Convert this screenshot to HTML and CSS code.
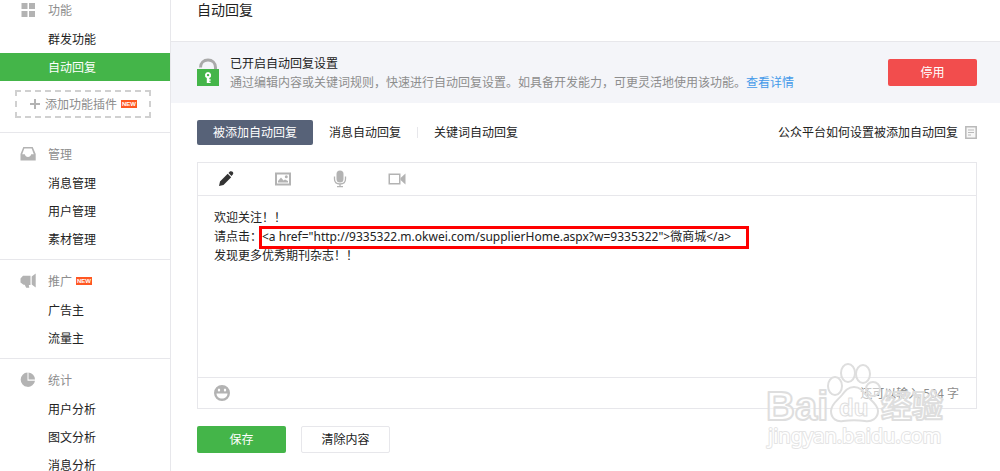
FILE: index.html
```html
<!DOCTYPE html>
<html lang="zh-CN">
<head>
  <meta charset="UTF-8" />
  <meta name="viewport" content="width=device-width, initial-scale=1" />
  <title>自动回复</title>
  <link rel="stylesheet" href="styles.css">
</head>
<body>
  <div class="layout">
    <nav class="sidebar">
      <section class="menu">
        <h2 class="menu-title">
          <svg class="menu-icon" viewBox="0 0 16 16"><path d="M1.500 1h6v6h-6zM9 1h6v6H9zM1.500 9h6v6h-6zM9 9h6v6H9z"/></svg>
          功能
        </h2>
        <a class="menu-item" href="#">群发功能</a>
        <a class="menu-item active" href="#">自动回复</a>
        <a class="add-plugin" href="#">
          <svg class="plus" viewBox="0 0 12 12"><path d="M5 1h2v4h4v2H7v4H5V7H1V5h4z"/></svg>
          添加功能插件
          <span class="new">NEW</span>
        </a>
      </section>

      <section class="menu">
        <h2 class="menu-title">
          <svg class="menu-icon" viewBox="0 0 16 16"><path fill-rule="evenodd" d="M3.300 1h9.400L15.700 8v6.500H.5V8zM4.300 2.500L2.200 8.300h2.600c.6 2 1.600 2.700 3.200 2.700s2.600-.7 3.200-2.700h2.600L11.700 2.500z"/></svg>
          管理
        </h2>
        <a class="menu-item" href="#">消息管理</a>
        <a class="menu-item" href="#">用户管理</a>
        <a class="menu-item" href="#">素材管理</a>
      </section>

      <section class="menu">
        <h2 class="menu-title">
          <svg class="menu-icon" viewBox="0 0 16 16"><path d="M15.700.5v14l-4-3V3.500zM10.500 2.800v9.200H8.800l.5 2.800H6.200l-1.500-3H3.500L.5 9.500v-4l2.500-2.700z"/></svg>
          推广
          <span class="new">NEW</span>
        </h2>
        <a class="menu-item" href="#">广告主</a>
        <a class="menu-item" href="#">流量主</a>
      </section>

      <section class="menu">
        <h2 class="menu-title">
          <svg class="menu-icon" viewBox="0 0 16 16"><path d="M7.500.5A7.200 7.200 0 1 0 15 8.700H7.500zM8.500.5v7H15A7 7 0 0 0 8.500.5z"/></svg>
          统计
        </h2>
        <a class="menu-item" href="#">用户分析</a>
        <a class="menu-item" href="#">图文分析</a>
        <a class="menu-item" href="#">消息分析</a>
      </section>
    </nav>

    <main class="main">
      <h1 class="page-title">自动回复</h1>

      <div class="notice">
        <svg class="lock" viewBox="0 0 22 29">
          <path d="M3.500 9.500C3.500 4.800 6.800 2 11 2s7.500 2.800 7.500 7.500V12" fill="none" stroke="#a9a9a9" stroke-width="3"/>
          <path d="M0 11h22v17H0z" fill="#44b549"/>
          <path fill="#fff" fill-rule="evenodd" d="M11 14a3.200 3.200 0 0 1 1.300 6.100v1.200h1.300v1.400h-1.300v1h1.300V25H9.800v-4.900A3.200 3.200 0 0 1 11 14zM11 15.900a1.200 1.200 0 1 0 .1 2.400 1.200 1.200 0 0 0-.1-2.400z"/>
        </svg>
        <div class="notice-text">
          <strong class="notice-title">已开启自动回复设置</strong>
          <p class="notice-desc">通过编辑内容或关键词规则，快速进行自动回复设置。如具备开发能力，可更灵活地使用该功能。<a href="#">查看详情</a></p>
        </div>
        <button class="btn btn-warn" type="button">停用</button>
      </div>

      <div class="content">
        <div class="tabs">
          <a class="tab selected" href="#">被添加自动回复</a>
          <a class="tab" href="#">消息自动回复</a>
          <a class="tab divided" href="#">关键词自动回复</a>
          <a class="help" href="#">
            公众平台如何设置被添加自动回复
            <svg class="doc" viewBox="0 0 12 13"><path d="M.8.8h10.400v11.400H.8z" fill="#f7f7f7" stroke="#b9b9b9" stroke-width="1.500"/><path d="M3 4h6M3 6.500h6M3 9h3" stroke="#b9b9b9"/></svg>
          </a>
        </div>

        <form class="editor-form">
          <div class="editor">
            <div class="toolbar">
              <button class="tool current" type="button" aria-label="文字">
                <svg viewBox="0 0 18 18"><path d="M2 16l1-4.500 7.700-7.700 3.500 3.500L6.500 15zM11.500 3l1.400-1.400c.9-.7 2-.5 2.700.2.800.8 1 1.900.2 2.700l-1.300 1.400z"/></svg>
              </button>
              <button class="tool" type="button" aria-label="图片">
                <svg viewBox="0 0 18 18"><path fill-rule="evenodd" d="M1 2.500h16v13H1zM3 4.500v9h12v-9zM4 12.500v-1.500l3-3.500 2.500 3 1.500-1 3 1.500v1.500zM12.300 5.300a1.500 1.500 0 1 1 0 3 1.500 1.500 0 0 1 0-3z"/></svg>
              </button>
              <button class="tool" type="button" aria-label="语音">
                <svg viewBox="0 0 18 18"><rect x="5.500" y="0.500" width="7" height="12" rx="3.500"/><path d="M3.500 6.500V9c0 3.300 2.500 5 5.500 5s5.500-1.700 5.500-5V6.500M9 14v3M6 16.700h6" fill="none" stroke="#b3b3b3" stroke-width="1.300"/></svg>
              </button>
              <button class="tool" type="button" aria-label="视频">
                <svg viewBox="0 0 18 18"><path fill-rule="evenodd" d="M.5 3.500h12v11H.5zM2 5v8h9V5z"/><path d="M12.500 8L17.500 3.500v11L12.500 10z"/></svg>
              </button>
            </div>
            <div class="edit-area">
              <textarea class="edit-text" aria-label="回复内容" spellcheck="false">欢迎关注！！
请点击：&lt;a href="http://9335322.m.okwei.com/supplierHome.aspx?w=9335322"&gt;微商城&lt;/a&gt;
发现更多优秀期刊杂志！！</textarea>
              <span class="mark"></span>
            </div>
            <div class="editor-foot">
              <button class="tool" type="button" aria-label="表情">
                <svg viewBox="0 0 18 18"><path fill-rule="evenodd" d="M9 1a8 8 0 1 1 0 16A8 8 0 0 1 9 1zM3.500 9.500c.2 3.500 2.500 5 5.500 5s5.300-1.500 5.500-5zM6 4.500a1.200 1.500 0 1 0 0 3 1.200 1.500 0 0 0 0-3zM12 4.500a1.200 1.500 0 1 0 0 3 1.200 1.500 0 0 0 0-3z"/></svg>
              </button>
              <span class="count">还可以输入 504 字</span>
            </div>
          </div>
          <div class="actions">
            <button class="btn btn-primary" type="button">保存</button>
            <button class="btn btn-default" type="button">清除内容</button>
          </div>
        </form>
      </div>

      <svg class="watermark" viewBox="0 0 190 90">
        <g class="wm-shape">
          <ellipse cx="75" cy="24" rx="7" ry="9"/>
          <ellipse cx="88" cy="11" rx="7" ry="9"/>
          <ellipse cx="103" cy="12" rx="7" ry="9"/>
          <ellipse cx="113" cy="27" rx="7" ry="7"/>
          <path d="M94 25c-6 0-9 4-12 8-4 5-11 9-11 16 0 8 6 11 12 10 7-1 15-1 22 0 6 1 13-2 13-10 0-7-8-11-12-16-3-4-6-8-12-8z"/>
        </g>
        <text class="wm-big" x="6" y="58">Bai</text>
        <text class="wm-du" x="79" y="54">du</text>
        <text class="wm-cn" x="121" y="55">经验</text>
        <text class="wm-url" x="8" y="81">jingyan.baidu.com</text>
      </svg>
    </main>
  </div>
</body>
</html>
```
FILE: styles.css
```css
* {
  box-sizing: border-box;
}
body {
  margin: 0;
  height: 100vh;
  overflow: hidden;
  background-color: #fff;
  color: #222;
  font-family: "Noto Sans", "Noto Sans CJK SC", sans-serif;
  font-size: 12px;
  line-height: 19px;
}
a {
  color: inherit;
  text-decoration: none;
}
h1, h2, p {
  margin: 0;
  font-weight: normal;
}
button, textarea {
  font: inherit;
}
button {
  cursor: pointer;
}
.layout {
  display: flex;
  align-items: stretch;
  min-height: 100vh;
}

/* sidebar */
.sidebar {
  flex: 0 0 171px;
  margin-top: -12px;
  border-right: 1px solid #e7e7eb;
}
.menu {
  padding: 7px 0 6px;
  border-top: 1px solid #e7e7eb;
}
.menu-title {
  display: flex;
  align-items: center;
  height: 28px;
  margin-bottom: 1px;
  padding-left: 20px;
  color: #8d8d8d;
  font-size: 12px;
}
.menu-icon {
  width: 16px;
  height: 16px;
  margin-right: 12px;
  fill: #b3b3b3;
}
.menu-item {
  display: block;
  height: 28px;
  padding-left: 48px;
  line-height: 30px;
}
.menu-item.active {
  background-color: #44b549;
  color: #fff;
}
.add-plugin {
  display: flex;
  align-items: center;
  justify-content: center;
  height: 28px;
  margin: 9px 19px 8px 15px;
  border: 2px dashed #d0d0d0;
  color: #8d8d8d;
}
.plus {
  width: 12px;
  height: 12px;
  margin-right: 4px;
  fill: #b3b3b3;
}
.new {
  margin-left: 4px;
  padding: 0 1px;
  background-color: #ff5722;
  color: #fff;
  font-family: "Liberation Sans", sans-serif;
  font-size: 6px;
  font-weight: bold;
  line-height: 8px;
}

/* main column */
.main {
  position: relative;
  flex: 1;
  min-width: 0;
}
.page-title {
  height: 41px;
  padding: 0 26px;
  font-size: 14px;
}
.notice {
  display: flex;
  align-items: center;
  height: 62px;
  padding: 0 23px 0 26px;
  border-top: 1px solid #e7e7eb;
  background-color: #f4f5f9;
}
.lock {
  width: 22px;
  height: 29px;
  margin-right: 11px;
}
.notice-text {
  flex: 1;
}
.notice-title {
  display: block;
  font-weight: normal;
}
.notice-desc {
  color: #8d8d8d;
}
.notice-desc a {
  color: #459ae9;
}
.btn {
  width: 89px;
  height: 27px;
  padding: 0;
  border: 1px solid transparent;
  border-radius: 2px;
}
.btn-warn {
  background-color: #f24d4d;
  color: #fff;
}
.btn-primary {
  background-color: #44b549;
  color: #fff;
}
.btn-default {
  border-color: #e7e7eb;
  background-color: #fff;
  color: #222;
}
.content {
  padding: 17px 23px 0 26px;
}
.tabs {
  display: flex;
  align-items: center;
  height: 25px;
  margin-bottom: 17px;
}
.tab {
  padding: 0 16px;
  line-height: 25px;
}
.tab.selected {
  border-radius: 2px;
  background-color: #576278;
  color: #fff;
}
.tab.divided {
  line-height: 11px;
  border-left: 1px solid #e7e7eb;
}
.help {
  display: flex;
  align-items: center;
  gap: 7px;
  margin-left: auto;
}
.doc {
  width: 12px;
  height: 13px;
}

/* editor */
.editor {
  border: 1px solid #e7e7eb;
}
.toolbar {
  display: flex;
  align-items: center;
  gap: 39px;
  height: 33px;
  padding-left: 19px;
  border-bottom: 1px solid #e7e7eb;
}
.tool {
  width: 18px;
  height: 18px;
  padding: 0;
  border: 0;
  background: none;
}
.tool svg {
  display: block;
  width: 18px;
  height: 18px;
  fill: #b3b3b3;
}
.tool.current svg {
  fill: #333;
}
.edit-area {
  position: relative;
}
.edit-text {
  display: block;
  width: 100%;
  height: 181px;
  padding: 12px 16px;
  border: 0;
  outline: 0;
  resize: none;
  background: none;
  color: #222;
  line-height: 19px;
}
.mark {
  position: absolute;
  top: 30px;
  left: 61px;
  width: 490px;
  height: 23px;
  border: 3px solid #f00;
  pointer-events: none;
}
.editor-foot {
  display: flex;
  align-items: center;
  justify-content: space-between;
  height: 31px;
  padding: 0 17px 0 15px;
  border-top: 1px solid #e7e7eb;
}
.count {
  color: #8d8d8d;
}
.actions {
  display: flex;
  gap: 15px;
  margin-top: 17px;
}

/* watermark over the page corner */
.watermark {
  position: absolute;
  right: 50px;
  top: 362px;
  width: 190px;
  height: 90px;
  pointer-events: none;
}
.wm-shape, .watermark text {
  fill: #fff;
  fill-opacity: 0.5;
  stroke: #dedede;
  stroke-width: 2px;
  stroke-linejoin: round;
}
.watermark text {
  font-family: "Liberation Sans", "Noto Sans CJK SC", sans-serif;
  font-weight: bold;
}
.watermark .wm-big {
  font-size: 40px;
}
.watermark .wm-du {
  font-size: 24px;
  stroke-width: 1px;
}
.watermark .wm-cn {
  font-size: 31px;
}
.watermark .wm-url {
  font-family: "Noto Sans", sans-serif;
  font-size: 20px;
  font-weight: normal;
  stroke: #e4e4e4;
  paint-order: stroke;
  fill-opacity: 1;
}
```
